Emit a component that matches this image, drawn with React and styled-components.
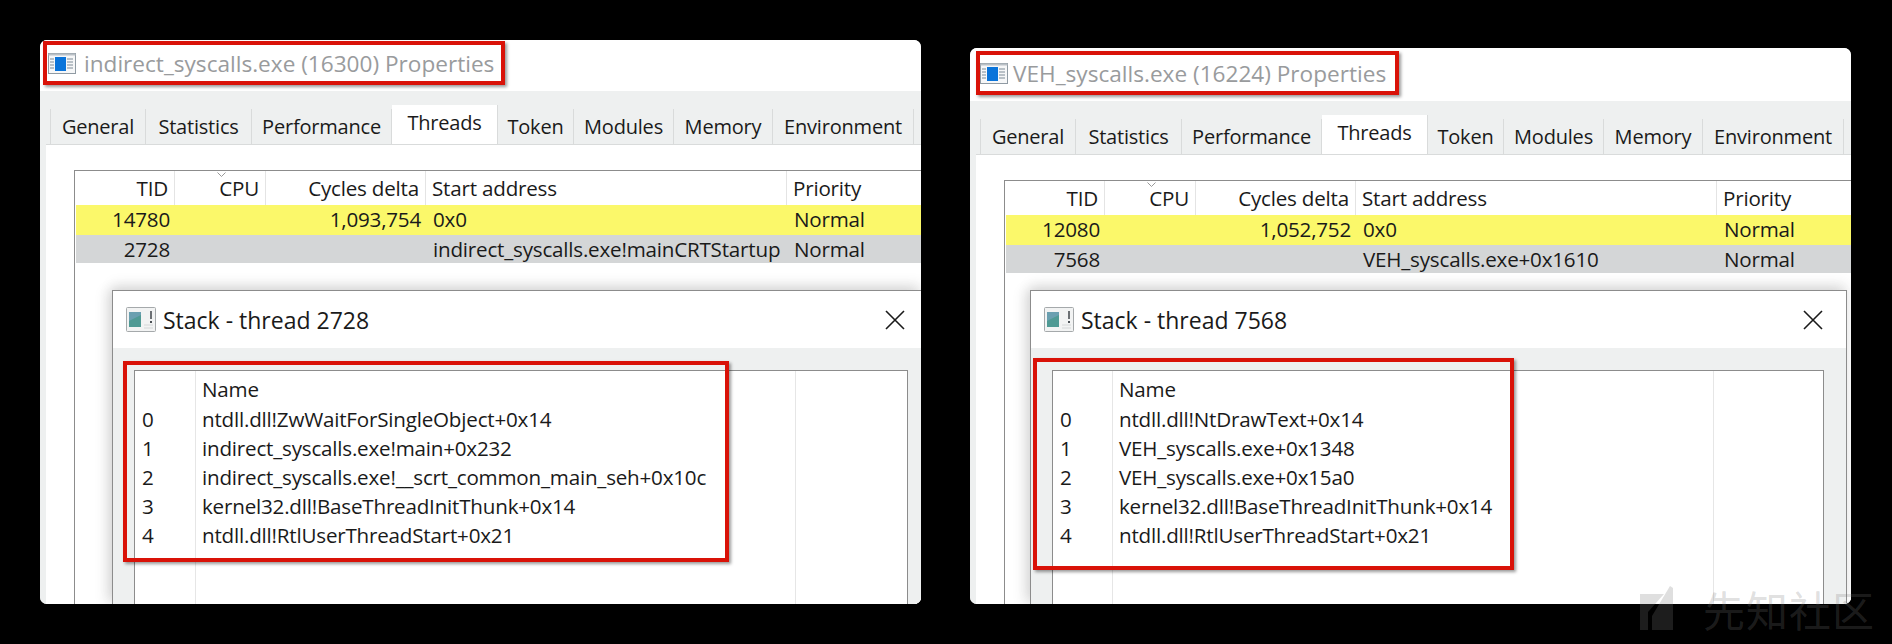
import React from 'react';
import styled, { createGlobalStyle } from 'styled-components';

const GlobalStyle = createGlobalStyle`
    html, body {
        margin: 0;
        padding: 0;
        background: #000;
    }
    body {
        width: 1892px;
        height: 644px;
        overflow: hidden;
        font-family: "Open Sans", "Noto Sans", sans-serif;
        color: #1a1a1a;
    }
`;

const Page = styled.div`
    position: relative;
    display: flex;
    align-items: flex-start;
    gap: 49px;
    width: 1892px;
    height: 644px;
    padding-left: 40px;
    box-sizing: border-box;
    background: #000;
`;

const Win = styled.section`
    position: relative;
    display: flex;
    flex-direction: column;
    flex: none;
    width: 881px;
    height: ${(p) => p.$height}px;
    margin-top: ${(p) => p.$top}px;
    border-radius: 7px;
    background: #fff;
    overflow: hidden;
`;

const TitleBar = styled.header`
    display: flex;
    align-items: flex-start;
    flex: none;
    height: ${(p) => p.$height}px;
    padding: ${(p) => p.$pad};
    box-sizing: border-box;
    background: #fff;
`;

const Highlight = styled.div`
    display: flex;
    align-items: center;
    gap: ${(p) => p.$gap}px;
    width: ${(p) => p.$width}px;
    height: ${(p) => p.$height}px;
    padding-left: ${(p) => p.$inset}px;
    box-sizing: border-box;
    border: 4px solid #d91208;
    box-shadow: 2px 2px 3px rgba(0, 0, 0, 0.4);
`;

const TitleText = styled.span`
    font-size: 22.6px;
    color: #999b9d;
    white-space: nowrap;
`;

const Body = styled.div`
    flex: 1;
    display: flex;
    flex-direction: column;
    background: #eef0f0;
    padding-top: 17px;
    padding-left: 6px;
    min-height: 0;
`;

const TabRow = styled.nav`
    display: flex;
    align-items: flex-end;
    flex: none;
    height: 36px;
    padding-left: 4px;
    box-sizing: border-box;
`;

const Tab = styled.div`
    display: flex;
    justify-content: center;
    align-items: ${(p) => (p.$active ? 'flex-start' : 'center')};
    flex: none;
    width: ${(p) => p.$width}px;
    height: ${(p) => (p.$active ? 39 : 35)}px;
    margin-top: ${(p) => (p.$active ? -4 : 0)}px;
    box-sizing: border-box;
    padding-top: ${(p) => (p.$active ? 4 : 0)}px;
    background: ${(p) => (p.$active ? '#fff' : 'transparent')};
    border-right: 1px solid #d9dbdb;
    border-left: ${(p) => (p.$first ? '1px solid #d9dbdb' : 'none')};
    font-size: 20px;
    letter-spacing: -0.2px;
    white-space: nowrap;
`;

const Panel = styled.div`
    flex: 1;
    display: flex;
    flex-direction: column;
    padding: 25px 0 0 28px;
    background: #fff;
    border-top: 1px solid #d9dbdb;
    min-height: 0;
`;

const ListBox = styled.div`
    flex: 1;
    border-left: 1px solid #8c8c8c;
    border-top: 1px solid #8c8c8c;
    background: #fff;
    font-size: 20.6px;
    letter-spacing: -0.2px;
`;

const Cols = `
    display: grid;
    grid-template-columns: 100px 91px 160px 361px 1fr;
`;

const HeadRow = styled.div`
    ${Cols}
    height: 34px;
    align-items: center;
`;

const HeadCell = styled.div`
    position: relative;
    height: 100%;
    display: flex;
    align-items: center;
    justify-content: ${(p) => (p.$right ? 'flex-end' : 'flex-start')};
    padding: 0 6px;
    box-sizing: border-box;
    border-right: ${(p) => (p.$last ? 'none' : '1px solid #e4e4e4')};
    white-space: nowrap;
`;

const SortCaret = styled.svg`
    position: absolute;
    top: 1px;
    right: 39px;
    width: 9px;
    height: 5px;
`;

const Row = styled.div`
    ${Cols}
    height: ${(p) => p.$height}px;
    box-sizing: border-box;
    padding-bottom: 2px;
    align-items: center;
    margin-left: 1px;
    background: ${(p) => p.$bg};
`;

const Cell = styled.div`
    padding: 0 6px;
    white-space: nowrap;
    text-align: ${(p) => (p.$right ? 'right' : 'left')};
`;

const Dialog = styled.div`
    position: absolute;
    left: ${(p) => p.$left}px;
    top: ${(p) => p.$top}px;
    width: ${(p) => p.$width}px;
    bottom: 0;
    display: flex;
    flex-direction: column;
    background: #eef0f0;
    border-left: 1px solid #8c8c8c;
    border-top: 1px solid #8c8c8c;
    border-right: ${(p) => (p.$framed ? '1px solid #8c8c8c' : 'none')};
    box-shadow: -6px 0 12px rgba(0, 0, 0, 0.1), 0 -6px 12px rgba(0, 0, 0, 0.1);
`;

const DialogHead = styled.header`
    display: flex;
    align-items: center;
    flex: none;
    height: 57px;
    gap: 7px;
    padding: 0 13px;
    background: #fff;
    font-size: 23px;
`;

const CloseBox = styled.div`
    margin-left: auto;
    display: flex;
    margin-right: ${(p) => p.$gap}px;
`;

const DialogBody = styled.div`
    position: relative;
    flex: 1;
    min-height: 0;
    padding: 22px ${(p) => p.$right}px 0 ${(p) => p.$left}px;
`;

const StackList = styled.div`
    height: 100%;
    background: #fff;
    border-left: 1px solid #8c8c8c;
    border-top: 1px solid #8c8c8c;
    border-right: 1px solid #8c8c8c;
    box-sizing: border-box;
    display: grid;
    grid-template-columns: ${(p) => p.$indexWidth}px ${(p) => p.$nameWidth}px 1fr;
    font-size: 20.6px;
    letter-spacing: -0.2px;
`;

const StackColumn = styled.div`
    border-right: ${(p) => (p.$last ? 'none' : '1px solid #e6e6e6')};
    padding: 3px 0 0 ${(p) => p.$pad}px;
    line-height: 29px;
    white-space: nowrap;
`;

const StackHead = styled.div`
    height: 31px;
    line-height: 31px;
`;

const StackMark = styled.div`
    position: absolute;
    left: ${(p) => p.$left}px;
    top: ${(p) => p.$top}px;
    width: ${(p) => p.$width}px;
    height: ${(p) => p.$height}px;
    box-sizing: border-box;
    border: 4px solid #d91208;
    box-shadow: 2px 2px 3px rgba(0, 0, 0, 0.4);
`;

const Watermark = styled.div`
    position: absolute;
    left: 1640px;
    top: 584px;
    display: flex;
    align-items: center;
    gap: 17px;
    color: rgba(120, 120, 120, 0.24);
    font-family: "Noto Sans CJK SC", sans-serif;
    font-size: 42px;
    letter-spacing: 1px;
    line-height: 50px;
    white-space: nowrap;
`;

const PropsIcon = () => (
    <svg width="28" height="21" viewBox="0 0 28 21">
        <rect x="0.5" y="0.5" width="27" height="20" fill="#f6f7f8" stroke="#8f9aa3" />
        <rect x="0.5" y="0.5" width="27" height="2" fill="#b9c0c6" />
        <rect x="7" y="4" width="11" height="14" fill="#0a74da" />
        <path d="M2 6h4M2 9h4M2 12h4M2 15h4M19 6h6M19 9h6M19 12h6M19 15h6" stroke="#7d8a96" strokeWidth="1" />
    </svg>
);

const StackIcon = () => (
    <svg width="30" height="25" viewBox="0 0 30 25">
        <rect x="0.5" y="0.5" width="29" height="24" rx="1" fill="#f2f3f3" stroke="#a5a9ab" />
        <rect x="3" y="5" width="12" height="15" fill="#4f9a94" />
        <path d="M3 5h12v3L3 14z" fill="#6a9fb0" />
        <path d="M25 4v8" stroke="#4a4f54" strokeWidth="1.6" />
        <rect x="24" y="14" width="2" height="2" fill="#4a4f54" />
        <path d="M18 18h9M18 21h9" stroke="#d4d7d8" />
    </svg>
);

const CloseIcon = () => (
    <svg width="20" height="20" viewBox="0 0 20 20">
        <path d="M1 1l18 18M19 1L1 19" stroke="#1a1a1a" strokeWidth="1.6" fill="none" />
    </svg>
);

const tabs = [
    ['General', 96],
    ['Statistics', 106],
    ['Performance', 140],
    ['Threads', 106],
    ['Token', 76],
    ['Modules', 100],
    ['Memory', 99],
    ['Environment', 141],
];

const windows = [
    {
        height: 564,
        top: 40,
        titleHeight: 51,
        title: 'indirect_syscalls.exe (16300) Properties',
        pad: '1px 0 0 3px',
        markW: 462,
        markH: 44,
        inset: 1,
        gap: 8,
        rows: [
            ['14780', '1,093,754', '0x0'],
            ['2728', '', 'indirect_syscalls.exe!mainCRTStartup'],
        ],
        thread: '2728',
        frames: [
            'ntdll.dll!ZwWaitForSingleObject+0x14',
            'indirect_syscalls.exe!main+0x232',
            'indirect_syscalls.exe!__scrt_common_main_seh+0x10c',
            'kernel32.dll!BaseThreadInitThunk+0x14',
            'ntdll.dll!RtlUserThreadStart+0x21',
        ],
        dlg: { left: 72, top: 250, width: 808, framed: false, listLeft: 21, listRight: 13, close: 3 },
        mark: { left: 10, top: 13, width: 606, height: 201 },
        indexWidth: 61,
        nameWidth: 600,
    },
    {
        height: 556,
        top: 48,
        titleHeight: 53,
        title: 'VEH_syscalls.exe (16224) Properties',
        pad: '3px 0 0 6px',
        markW: 423,
        markH: 44,
        inset: 0,
        gap: 5,
        rows: [
            ['12080', '1,052,752', '0x0'],
            ['7568', '', 'VEH_syscalls.exe+0x1610'],
        ],
        thread: '7568',
        frames: [
            'ntdll.dll!NtDrawText+0x14',
            'VEH_syscalls.exe+0x1348',
            'VEH_syscalls.exe+0x15a0',
            'kernel32.dll!BaseThreadInitThunk+0x14',
            'ntdll.dll!RtlUserThreadStart+0x21',
        ],
        dlg: { left: 60, top: 242, width: 815, framed: true, listLeft: 21, listRight: 22, close: 10 },
        mark: { left: 2, top: 10, width: 481, height: 212 },
        indexWidth: 60,
        nameWidth: 601,
    },
];

const PropertiesWindow = ({ w }) => (
    <Win $height={w.height} $top={w.top}>
        <TitleBar $pad={w.pad} $height={w.titleHeight}>
            <Highlight $width={w.markW} $height={w.markH} $inset={w.inset} $gap={w.gap}>
                <PropsIcon />
                <TitleText>{w.title}</TitleText>
            </Highlight>
        </TitleBar>
        <Body>
            <TabRow>
                {tabs.map(([name, width], i) => (
                    <Tab key={name} $width={width} $first={i === 0} $active={name === 'Threads'}>{name}</Tab>
                ))}
            </TabRow>
            <Panel>
                <ListBox>
                    <HeadRow>
                        <HeadCell $right>TID</HeadCell>
                        <HeadCell $right>
                            <SortCaret viewBox="0 0 9 5"><path d="M0.5 0.5l4 4 4-4" stroke="#999" fill="none" /></SortCaret>
                            CPU
                        </HeadCell>
                        <HeadCell $right>Cycles delta</HeadCell>
                        <HeadCell>Start address</HeadCell>
                        <HeadCell $last>Priority</HeadCell>
                    </HeadRow>
                    {w.rows.map((r, i) => (
                        <Row key={r[0]} $height={i === 0 ? 30 : 28} $bg={i === 0 ? '#fbf86a' : '#d4d6d7'}>
                            <Cell $right>{r[0]}</Cell>
                            <Cell />
                            <Cell $right>{r[1]}</Cell>
                            <Cell>{r[2]}</Cell>
                            <Cell>Normal</Cell>
                        </Row>
                    ))}
                </ListBox>
            </Panel>
        </Body>
        <Dialog $left={w.dlg.left} $top={w.dlg.top} $width={w.dlg.width} $framed={w.dlg.framed}>
            <DialogHead>
                <StackIcon />
                <span>Stack - thread {w.thread}</span>
                <CloseBox $gap={w.dlg.close}><CloseIcon /></CloseBox>
            </DialogHead>
            <DialogBody $left={w.dlg.listLeft} $right={w.dlg.listRight}>
                <StackList $indexWidth={w.indexWidth} $nameWidth={w.nameWidth}>
                    <StackColumn $pad={7}>
                        <StackHead />
                        {w.frames.map((f, i) => <div key={f}>{i}</div>)}
                    </StackColumn>
                    <StackColumn $pad={6}>
                        <StackHead>Name</StackHead>
                        {w.frames.map((f) => <div key={f}>{f}</div>)}
                    </StackColumn>
                    <StackColumn $last />
                </StackList>
                <StackMark $left={w.mark.left} $top={w.mark.top} $width={w.mark.width} $height={w.mark.height} />
            </DialogBody>
        </Dialog>
    </Win>
);

const App = () => (
    <Page>
        <GlobalStyle />
        {windows.map((w) => <PropertiesWindow key={w.title} w={w} />)}
        <Watermark>
            <svg width="46" height="46" viewBox="0 0 46 46">
                <path d="M0 8h24L8 26v18H0zM30 0l3 2v42H12V30z" fill="currentColor" />
            </svg>
            <span>先知社区</span>
        </Watermark>
    </Page>
);

export default App;
